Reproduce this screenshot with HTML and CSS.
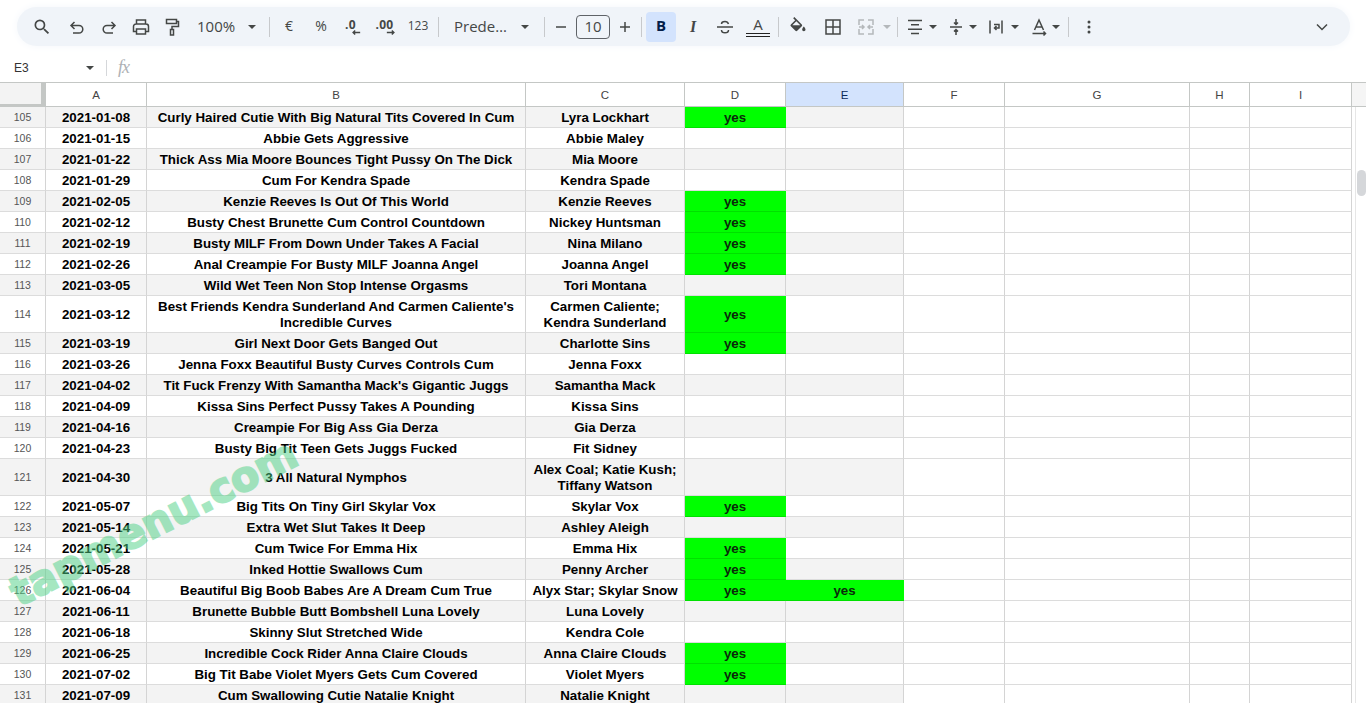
FILE: index.html
```html
<!DOCTYPE html>
<html lang="en">
<head>
<meta charset="utf-8">
<title>Sheet</title>
<link rel="stylesheet" href="styles.css">
</head>
<body>
<header class="toolbar">
  <button class="btn first"><svg viewBox="0 0 24 24" class="ic fill"><path d="M15.5 14h-.79l-.28-.27A6.471 6.471 0 0 0 16 9.5 6.5 6.5 0 1 0 9.5 16c1.61 0 3.09-.59 4.23-1.57l.27.28v.79l5 4.99L20.49 19l-4.99-5zm-6 0C7.01 14 5 11.99 5 9.5S7.01 5 9.5 5 14 7.01 14 9.5 11.99 14 9.5 14z"/></svg></button>
  <button class="btn"><svg viewBox="0 0 24 24" class="ic st"><path d="M9.500 7 6 10.500 9.500 14M6.500 10.500H14a3.800 3.800 0 0 1 0 7.600H8"/></svg></button>
  <button class="btn"><svg viewBox="0 0 24 24" class="ic st"><path d="M14.500 7 18 10.500 14.500 14M17.500 10.500H10a3.800 3.800 0 0 0 0 7.600h6"/></svg></button>
  <button class="btn"><svg viewBox="0 0 24 24" class="ic st"><path d="M7.500 9V5h9v4M7.500 16.500H4.500V11.500A2.500 2.500 0 0 1 7 9h10a2.500 2.500 0 0 1 2.500 2.500v5h-3M7.500 14h9v5h-9z"/></svg></button>
  <button class="btn paint"><svg viewBox="0 0 24 24" class="ic st"><path d="M6.500 4.500h10v4h-10zM16.500 6.500H18.500V11.500H12V14M10.500 14.500h3V20h-3z"/></svg></button>
  <div class="drop zoom"><span class="lbl">100%</span><i class="caret"></i></div>
  <span class="sep"></span>
  <button class="btn txt">€</button>
  <button class="btn txt">%</button>
  <button class="btn dec">.0<svg viewBox="0 0 12 8" class="arr"><path d="M11 4H3M5 1.500 2.500 4 5 6.500"/></svg></button>
  <button class="btn dec dec2">.00<svg viewBox="0 0 12 8" class="arr"><path d="M1 4h8M7 1.500 9.500 4 7 6.500"/></svg></button>
  <button class="btn num">123</button>
  <span class="sep"></span>
  <div class="drop font"><span class="lbl">Prede…</span><i class="caret"></i></div>
  <span class="sep"></span>
  <button class="btn pm"><svg viewBox="0 0 24 24" class="ic st"><path d="M7 12h10"/></svg></button>
  <span class="size">10</span>
  <button class="btn pm"><svg viewBox="0 0 24 24" class="ic st"><path d="M7 12h10M12 7v10"/></svg></button>
  <span class="sep"></span>
  <button class="btn bold">B</button>
  <button class="btn ital">I</button>
  <button class="btn"><svg viewBox="0 0 24 24" class="ic st"><path d="M4 12h16M15.500 9C15 7.500 13.800 6.500 12 6.500S8.500 7.500 8.500 9M8.500 15c0 1.800 1.500 2.800 3.500 2.800s3.500-1 3.500-2.800"/></svg></button>
  <button class="btn color"><span class="a">A</span><span class="dbl"></span></button>
  <span class="sep"></span>
  <button class="btn"><svg viewBox="0 0 24 24" class="ic fill"><path d="M16.560 8.940 7.620 0 6.210 1.410l2.380 2.380-5.150 5.150a1.500 1.500 0 0 0 0 2.120l5.500 5.500c.29.290.68.440 1.060.440s.77-.150 1.060-.440l5.500-5.500c.59-.58.590-1.530 0-2.120zM5.210 10 10 5.210 14.790 10H5.210zM19 11.500s-2 2.170-2 3.500c0 1.100.9 2 2 2s2-.9 2-2c0-1.330-2-3.500-2-3.500z"/></svg></button>
  <button class="btn bord"><svg viewBox="0 0 24 24" class="ic st"><path d="M5 5h14v14H5zM5 12h14M12 5v14"/></svg></button>
  <div class="drop merge"><svg viewBox="0 0 24 24" class="ic st mute"><path d="M5 10V5h5M14 5h5v5M5 14v5h5M14 19h5v-5M5 12h5M14 12h5M8 10l2 2-2 2M16 10l-2 2 2 2"/></svg><i class="caret pale"></i></div>
  <span class="sep"></span>
  <div class="drop al1"><svg viewBox="0 0 24 24" class="ic st"><path d="M5 5.500h14M8 9.800h8M5 14.200h14M8 18.500h8"/></svg><i class="caret"></i></div>
  <div class="drop al2"><svg viewBox="0 0 24 24" class="ic st"><path d="M6 12h12M12 4v5.500M10 7.500l2 2 2-2M12 20v-5.500M10 16.500l2-2 2 2"/></svg><i class="caret"></i></div>
  <div class="drop al3"><svg viewBox="0 0 24 24" class="ic st"><path d="M6 5.500v13M18 5.500v13M10 9.500h5v3.500h-4M12.500 11 10.500 13l2 2"/></svg><i class="caret"></i></div>
  <div class="drop al4"><svg viewBox="0 0 24 24" class="ic st"><path d="M7.500 15 12 5l4.500 10M9 12h6M5.500 18.500h13M16.500 16.500l2 2-2 2"/></svg><i class="caret"></i></div>
  <span class="sep"></span>
  <button class="btn more"><svg viewBox="0 0 24 24" class="ic fill"><circle cx="12" cy="6" r="1.800"/><circle cx="12" cy="12" r="1.800"/><circle cx="12" cy="18" r="1.800"/></svg></button>
  <button class="btn chev"><svg viewBox="0 0 24 24" class="ic st"><path d="M7 9.500 12 14.500l5-5"/></svg></button>
</header>

<div class="formula">
  <div class="ref"><span>E3</span><i class="caret"></i></div>
  <span class="fsep"></span>
  <em class="fx">fx</em>
</div>

<main class="sheet">
  <div class="grid">
    <div class="row head"><div class="corner"></div><div>A</div><div>B</div><div>C</div><div>D</div><div class="sel">E</div><div>F</div><div>G</div><div>H</div><div>I</div></div>
    <div class="row odd"><div class="rh">105</div><div>2021-01-08</div><div>Curly Haired Cutie With Big Natural Tits Covered In Cum</div><div>Lyra Lockhart</div><div class="g">yes</div><div></div><div></div><div></div><div></div><div></div></div>
    <div class="row"><div class="rh">106</div><div>2021-01-15</div><div>Abbie Gets Aggressive</div><div>Abbie Maley</div><div></div><div></div><div></div><div></div><div></div><div></div></div>
    <div class="row odd"><div class="rh">107</div><div>2021-01-22</div><div>Thick Ass Mia Moore Bounces Tight Pussy On The Dick</div><div>Mia Moore</div><div></div><div></div><div></div><div></div><div></div><div></div></div>
    <div class="row"><div class="rh">108</div><div>2021-01-29</div><div>Cum For Kendra Spade</div><div>Kendra Spade</div><div></div><div></div><div></div><div></div><div></div><div></div></div>
    <div class="row odd"><div class="rh">109</div><div>2021-02-05</div><div>Kenzie Reeves Is Out Of This World</div><div>Kenzie Reeves</div><div class="g">yes</div><div></div><div></div><div></div><div></div><div></div></div>
    <div class="row"><div class="rh">110</div><div>2021-02-12</div><div>Busty Chest Brunette Cum Control Countdown</div><div>Nickey Huntsman</div><div class="g">yes</div><div></div><div></div><div></div><div></div><div></div></div>
    <div class="row odd"><div class="rh">111</div><div>2021-02-19</div><div>Busty MILF From Down Under Takes A Facial</div><div>Nina Milano</div><div class="g">yes</div><div></div><div></div><div></div><div></div><div></div></div>
    <div class="row"><div class="rh">112</div><div>2021-02-26</div><div>Anal Creampie For Busty MILF Joanna Angel</div><div>Joanna Angel</div><div class="g">yes</div><div></div><div></div><div></div><div></div><div></div></div>
    <div class="row odd"><div class="rh">113</div><div>2021-03-05</div><div>Wild Wet Teen Non Stop Intense Orgasms</div><div>Tori Montana</div><div></div><div></div><div></div><div></div><div></div><div></div></div>
    <div class="row tall"><div class="rh">114</div><div>2021-03-12</div><div>Best Friends Kendra Sunderland And Carmen Caliente's Incredible Curves</div><div>Carmen Caliente; Kendra Sunderland</div><div class="g">yes</div><div></div><div></div><div></div><div></div><div></div></div>
    <div class="row odd"><div class="rh">115</div><div>2021-03-19</div><div>Girl Next Door Gets Banged Out</div><div>Charlotte Sins</div><div class="g">yes</div><div></div><div></div><div></div><div></div><div></div></div>
    <div class="row"><div class="rh">116</div><div>2021-03-26</div><div>Jenna Foxx Beautiful Busty Curves Controls Cum</div><div>Jenna Foxx</div><div></div><div></div><div></div><div></div><div></div><div></div></div>
    <div class="row odd"><div class="rh">117</div><div>2021-04-02</div><div>Tit Fuck Frenzy With Samantha Mack's Gigantic Juggs</div><div>Samantha Mack</div><div></div><div></div><div></div><div></div><div></div><div></div></div>
    <div class="row"><div class="rh">118</div><div>2021-04-09</div><div>Kissa Sins Perfect Pussy Takes A Pounding</div><div>Kissa Sins</div><div></div><div></div><div></div><div></div><div></div><div></div></div>
    <div class="row odd"><div class="rh">119</div><div>2021-04-16</div><div>Creampie For Big Ass Gia Derza</div><div>Gia Derza</div><div></div><div></div><div></div><div></div><div></div><div></div></div>
    <div class="row"><div class="rh">120</div><div>2021-04-23</div><div>Busty Big Tit Teen Gets Juggs Fucked</div><div>Fit Sidney</div><div></div><div></div><div></div><div></div><div></div><div></div></div>
    <div class="row odd tall"><div class="rh">121</div><div>2021-04-30</div><div>3 All Natural Nymphos</div><div>Alex Coal; Katie Kush; Tiffany Watson</div><div></div><div></div><div></div><div></div><div></div><div></div></div>
    <div class="row"><div class="rh">122</div><div>2021-05-07</div><div>Big Tits On Tiny Girl Skylar Vox</div><div>Skylar Vox</div><div class="g">yes</div><div></div><div></div><div></div><div></div><div></div></div>
    <div class="row odd"><div class="rh">123</div><div>2021-05-14</div><div>Extra Wet Slut Takes It Deep</div><div>Ashley Aleigh</div><div></div><div></div><div></div><div></div><div></div><div></div></div>
    <div class="row"><div class="rh">124</div><div>2021-05-21</div><div>Cum Twice For Emma Hix</div><div>Emma Hix</div><div class="g">yes</div><div></div><div></div><div></div><div></div><div></div></div>
    <div class="row odd"><div class="rh">125</div><div>2021-05-28</div><div>Inked Hottie Swallows Cum</div><div>Penny Archer</div><div class="g">yes</div><div></div><div></div><div></div><div></div><div></div></div>
    <div class="row"><div class="rh">126</div><div>2021-06-04</div><div>Beautiful Big Boob Babes Are A Dream Cum True</div><div>Alyx Star; Skylar Snow</div><div class="g">yes</div><div class="g">yes</div><div></div><div></div><div></div><div></div></div>
    <div class="row odd"><div class="rh">127</div><div>2021-06-11</div><div>Brunette Bubble Butt Bombshell Luna Lovely</div><div>Luna Lovely</div><div></div><div></div><div></div><div></div><div></div><div></div></div>
    <div class="row"><div class="rh">128</div><div>2021-06-18</div><div>Skinny Slut Stretched Wide</div><div>Kendra Cole</div><div></div><div></div><div></div><div></div><div></div><div></div></div>
    <div class="row odd"><div class="rh">129</div><div>2021-06-25</div><div>Incredible Cock Rider Anna Claire Clouds</div><div>Anna Claire Clouds</div><div class="g">yes</div><div></div><div></div><div></div><div></div><div></div></div>
    <div class="row"><div class="rh">130</div><div>2021-07-02</div><div>Big Tit Babe Violet Myers Gets Cum Covered</div><div>Violet Myers</div><div class="g">yes</div><div></div><div></div><div></div><div></div><div></div></div>
    <div class="row odd"><div class="rh">131</div><div>2021-07-09</div><div>Cum Swallowing Cutie Natalie Knight</div><div>Natalie Knight</div><div></div><div></div><div></div><div></div><div></div><div></div></div>
  </div>
  <aside class="scroll"><div class="scrolltop"></div><div class="track"><div class="thumb"></div></div></aside>
  <div class="mark">tapmenu.com</div>
</main>
</body>
</html>
```
FILE: styles.css
```css
* { box-sizing: border-box; }
html, body { margin: 0; height: 703px; overflow: hidden; background: #fff; }
body { font-family: "Liberation Sans", Arial, sans-serif; color: #000; }
button { border: 0; background: none; padding: 0; margin: 0; font: inherit; color: inherit; }

.toolbar { height: 39px; margin: 7px 16px 0 17px; width: 1333px; background: #f0f4f9; border-radius: 20px; display: flex; align-items: center; padding: 0 12px 0 9px; color: #444746; box-shadow: 0 0 8px #f4f7fb; }
.btn { width: 32px; height: 30px; flex: none; display: flex; align-items: center; justify-content: center; }
.ic { width: 20px; height: 20px; display: block; flex: none; }
.fill { fill: #444746; }
.st { width: 24px; height: 24px; fill: none; stroke: #444746; stroke-width: 1.500; }
.mute { stroke: #b4b8bb; }
.paint { width: 30px; }
.first { margin-right: 3px; }
.drop { display: flex; align-items: center; height: 30px; flex: none; }
.lbl { font: 15px "Open Sans", sans-serif; color: #444746; position: relative; top: -1px; }
.caret { width: 0; height: 0; border-left: 4.500px solid transparent; border-right: 4.500px solid transparent; border-top: 4.500px solid #444746; display: block; flex: none; }
.caret.pale { border-top-color: #b4b8bb; margin-left: 4.500px; }
.zoom { width: 79px; padding-left: 10px; gap: 13px; }
.font { width: 99px; padding-left: 12px; gap: 14px; }
.sep { width: 1px; height: 20px; background: #c7c9cc; margin: 0 3px; flex: none; }
.txt { font: 14px "Open Sans", sans-serif; padding-bottom: 2px; }
.dec { font: bold 12px "Open Sans", sans-serif; position: relative; letter-spacing: .3px; padding: 0 5px 5px 0; }
.arr { position: absolute; left: 14px; top: 17px; width: 10px; height: 7px; fill: none; stroke: #444746; stroke-width: 1.700; }
.dec2 { padding-right: 1px; }
.dec2 .arr { left: 17px; }
.num { width: 34px; font: 12px "Open Sans", sans-serif; padding-bottom: 2px; }
.pm { width: 26px; }
.size { width: 34px; height: 24px; margin: 0 2px; border: 1px solid #5f6368; border-radius: 4px; font: 15px/20px "Open Sans", sans-serif; text-align: center; flex: none; }
.bold { width: 30px; height: 30px; margin-left: 1px; padding-bottom: 3px; background: #d3e3fd; border-radius: 4px; font: bold 15px "Open Sans", sans-serif; color: #041e49; }
.ital { margin-left: 1px; font: italic bold 16px "Liberation Serif", serif; }
.color { width: 34px; flex-direction: column; gap: 1px; }
.a { font: 15px/15px "Open Sans", sans-serif; }
.dbl { width: 24px; height: 4px; border-top: 1px solid #222; border-bottom: 1px solid #222; }
.bord { margin-left: 3px; }
.merge { width: 45px; padding-left: 5px; }
.al1 { width: 43px; padding-left: 2px; gap: 1.500px; }
.al2 { width: 40px; gap: .5px; }
.al3 { width: 41px; gap: 2.500px; }
.al4 { width: 40px; padding-left: 2px; gap: .5px; }
.more { margin-left: 1px; }
.chev { margin-left: auto; }

.formula { height: 25px; margin-top: 11px; display: flex; align-items: center; padding-bottom: 4px; }
.ref { width: 106px; padding: 0 12px 0 14px; display: flex; justify-content: space-between; align-items: center; font-size: 12px; color: #333; }
.fsep { width: 1px; height: 16px; background: #d5d7da; }
.fx { margin-left: 11px; font: italic 18px "Liberation Serif", serif; color: #aeb1b5; letter-spacing: -1px; }

.sheet { display: flex; position: relative; height: 621px; overflow: hidden; border-top: 1px solid #c4c7c5; }
.grid { width: 1352px; flex: none; }
.row { display: grid; grid-template-columns: 46px 101px 379px 159px 101px 118px 101px 185px 60px 102px; height: 21px; }
.row > div { border-right: 1px solid #d4d4d4; border-bottom: 1px solid #dcdcdc; display: flex; align-items: center; justify-content: center; text-align: center; font-size: 13.330px; font-weight: bold; line-height: 16px; padding: 1px 5px 0; }
.row.tall { height: 37px; }
.row.odd > div:nth-child(-n+6):not(.g) { background: #f3f3f3; }
.row > .rh, .row.odd > .rh:not(.g) { font-size: 10.500px; font-weight: normal; color: #555; background: #fff; padding: 0; }
.row > .g { background: #00ff00; border-right-color: #00ff00; border-bottom-color: #00e000; color: #0a2a0a; }
.head { height: 24px; }
.row.head > div { font-size: 11.500px; font-weight: normal; color: #444; border-right-color: #c4c7c5; border-bottom-color: #c4c7c5; background: #fff; padding: 0; }
.row.head > .corner { background: #f3f3f3; border-right: 5px solid #c4c7c5; border-bottom: 3px solid #c4c7c5; }
.row.head > .sel { background: #d3e3fd; color: #0b2a5a; }

.scroll { flex: 1; display: flex; flex-direction: column; }
.scrolltop { height: 24px; background: #f5f5f5; border-bottom: 1px solid #c4c7c5; }
.track { flex: 1; position: relative; border-left: 1px solid #e6e6e6; margin-left: 3px; }
.thumb { position: absolute; left: 1px; top: 63px; width: 9px; height: 26px; background: #d5d7da; border-radius: 5px; }

.mark { position: absolute; left: 24px; top: 484px; font: bold 41px/50px "DejaVu Sans", sans-serif; color: #4ed184; -webkit-text-stroke: 2px #4ed184; opacity: .5; transform: rotate(-27deg); transform-origin: left bottom; white-space: nowrap; pointer-events: none; }
```
